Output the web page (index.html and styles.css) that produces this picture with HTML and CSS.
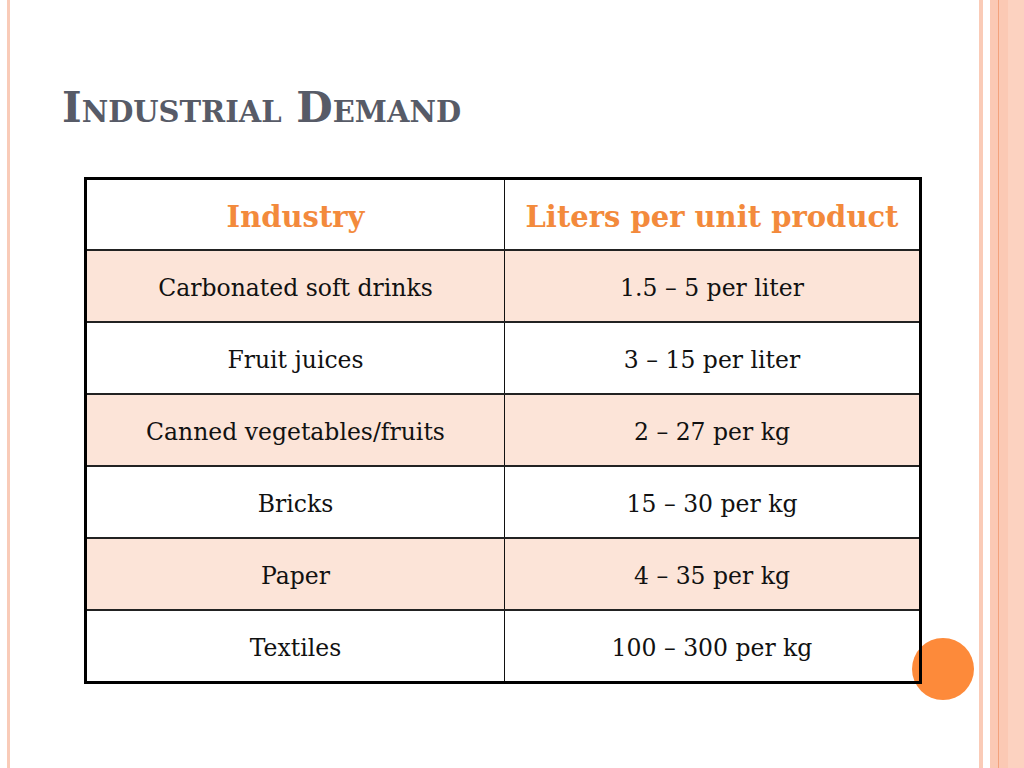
FILE: index.html
```html
<!DOCTYPE html>
<html>
<head>
<meta charset="utf-8">
<link rel="stylesheet" href="styles.css">
</head>
<body>
<div class="slide">
  <h1 class="title">Industrial Demand</h1>
  <div class="table-wrap">
    <div class="dot"></div>
    <table class="data">
      <thead>
        <tr><th>Industry</th><th>Liters per unit product</th></tr>
      </thead>
      <tbody>
        <tr class="alt"><td>Carbonated soft drinks</td><td>1.5 – 5 per liter</td></tr>
        <tr><td>Fruit juices</td><td>3 – 15 per liter</td></tr>
        <tr class="alt"><td>Canned vegetables/fruits</td><td>2 – 27 per kg</td></tr>
        <tr><td>Bricks</td><td>15 – 30 per kg</td></tr>
        <tr class="alt"><td>Paper</td><td>4 – 35 per kg</td></tr>
        <tr><td>Textiles</td><td>100 – 300 per kg</td></tr>
      </tbody>
    </table>
  </div>
</div>
</body>
</html>
```

FILE: styles.css
```css
html, body {
  margin: 0;
  padding: 0;
}
body {
  width: 1024px;
  height: 768px;
  overflow: hidden;
  background: linear-gradient(to right,
    #ffffff 0px, #ffffff 7px,
    #f9cbb8 7px, #f9cbb8 10px,
    #ffffff 10px, #ffffff 979px,
    #facbb7 979px, #facbb7 983px,
    #ffffff 983px, #ffffff 990px,
    #fbc9b4 990px, #fbc9b4 998px,
    #f3a27c 998px, #f3a27c 999px,
    #fbc9b4 999px, #fbc9b4 1008px,
    #fcd2c0 1008px, #fcd2c0 1024px);
  font-family: "DejaVu Serif", "Liberation Serif", serif;
}
.slide {
  padding: 86px 0 0 62px;
}
.title {
  margin: 0;
  font-size: 42px;
  font-weight: bold;
  font-variant: small-caps;
  color: #575b67;
  line-height: 44px;
}
.table-wrap {
  position: relative;
  margin: 47px 0 0 22px;
  width: 838px;
}
.dot {
  position: absolute;
  left: 828px;
  top: 461px;
  width: 62px;
  height: 62px;
  border-radius: 50%;
  background: #fd8a3a;
  z-index: 0;
}
.data {
  position: relative;
  z-index: 1;
  width: 838px;
  border-collapse: collapse;
  border: 3px solid #000;
  table-layout: fixed;
}
.data th, .data td {
  height: 67px;
  padding: 3px 0 0;
  text-align: center;
  vertical-align: middle;
  border-top: 2px solid #222;
  border-left: 1px solid #111;
  white-space: nowrap;
}
.data th:first-child, .data td:first-child {
  width: 417px;
}
.data th {
  height: 65px;
  padding-top: 4px;
  font-size: 29px;
  font-weight: bold;
  color: #f38a3c;
  border-top: none;
}
.data td {
  font-size: 23.5px;
  color: #111;
}
.data tr.alt td {
  background: #fce4d8;
}
```
